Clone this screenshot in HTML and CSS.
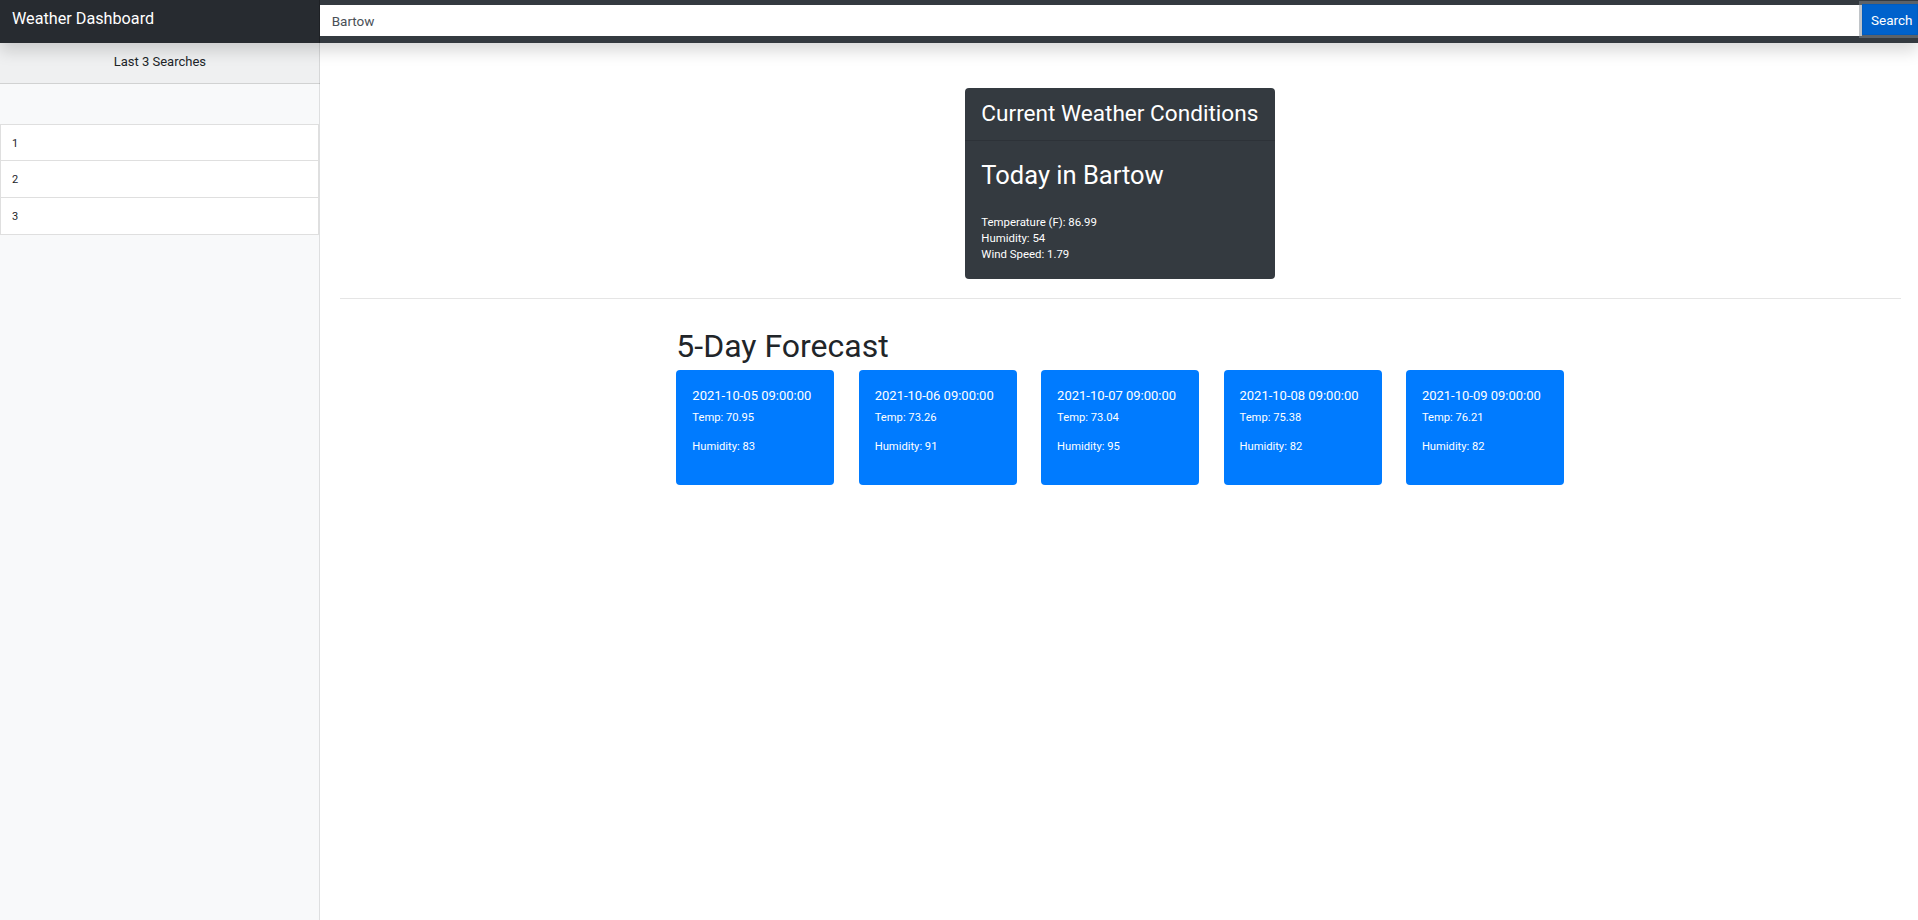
FILE: index.html
```
<!DOCTYPE html>
<html lang="en">
<head>
<meta charset="utf-8">
<title>Weather Dashboard</title>
<link rel="stylesheet" href="styles.css">
</head>
<body>
<header class="topbar">
  <a class="brand" href="#">Weather Dashboard</a>
  <form class="search">
    <input class="search-input" type="text" value="Bartow">
    <button class="search-btn" type="button">Search</button>
  </form>
</header>
<div class="layout">
  <nav class="sidebar">
    <div class="side-head">Last 3 Searches</div>
    <ul class="recent">
      <li class="recent-item">1</li>
      <li class="recent-item">2</li>
      <li class="recent-item">3</li>
    </ul>
  </nav>
  <main class="main">
    <section class="current">
      <div class="current-head">Current Weather Conditions</div>
      <div class="current-body">
        <h3 class="today">Today in Bartow</h3>
        <p class="stat">Temperature (F): 86.99</p>
        <p class="stat">Humidity: 54</p>
        <p class="stat">Wind Speed: 1.79</p>
      </div>
    </section>
    <hr class="divider">
    <section class="forecast">
      <h2 class="forecast-title">5-Day Forecast</h2>
      <div class="forecast-row">
        <div class="day"><div class="day-date">2021-10-05 09:00:00</div><p class="day-temp">Temp: 70.95</p><p class="day-hum">Humidity: 83</p></div>
        <div class="day"><div class="day-date">2021-10-06 09:00:00</div><p class="day-temp">Temp: 73.26</p><p class="day-hum">Humidity: 91</p></div>
        <div class="day"><div class="day-date">2021-10-07 09:00:00</div><p class="day-temp">Temp: 73.04</p><p class="day-hum">Humidity: 95</p></div>
        <div class="day"><div class="day-date">2021-10-08 09:00:00</div><p class="day-temp">Temp: 75.38</p><p class="day-hum">Humidity: 82</p></div>
        <div class="day"><div class="day-date">2021-10-09 09:00:00</div><p class="day-temp">Temp: 76.21</p><p class="day-hum">Humidity: 82</p></div>
      </div>
    </section>
  </main>
</div>
</body>
</html>
```
FILE: styles.css
```
* { box-sizing: border-box; }
html, body { margin: 0; padding: 0; }
body {
  font-family: "Segoe UI", Roboto, "Noto Sans", sans-serif;
  color: #212529;
  background: #fff;
  height: 920px;
  display: flex;
  flex-direction: column;
  overflow: hidden;
}
.topbar {
  position: relative;
  z-index: 2;
  height: 43px;
  flex: none;
  display: flex;
  background: #343a40;
  box-shadow: 0 8px 16px rgba(0,0,0,.15);
}
.brand {
  width: 319.67px;
  flex: none;
  padding: 0 0 5px 12px;
  line-height: 38px;
  font-size: 16.2px;
  color: #fff;
  text-decoration: none;
  background: rgba(0,0,0,.25);
  box-shadow: inset -1px 0 0 rgba(0,0,0,.25);
}
.search {
  flex: 1;
  display: flex;
  align-items: flex-start;
  margin: 0;
}
.search-input {
  flex: 1;
  height: 31px;
  margin-top: 5px;
  border: 0;
  padding: 0 12px;
  font-family: inherit;
  font-size: 13.5px;
  color: #495057;
  background: #fff;
  outline: none;
}
.search-btn {
  width: 56px;
  height: 31px;
  margin-top: 4px;
  border: 1px solid #005cbf;
  background: #0062cc;
  color: #fff;
  font-family: inherit;
  font-size: 13.5px;
  padding: 0 0 0 8px;
  text-align: left;
  box-shadow: 0 0 0 3px rgba(130,138,145,.5);
}
.layout {
  flex: 1;
  display: flex;
  min-height: 0;
}
.sidebar {
  width: 319.67px;
  flex: none;
  background: #f8f9fa;
  box-shadow: inset -1px 0 0 rgba(0,0,0,.1);
}
.side-head {
  height: 41px;
  padding-bottom: 3px;
  line-height: 37px;
  font-size: 13px;
  text-align: center;
  background: rgba(0,0,0,.035);
  border-bottom: 1px solid rgba(0,0,0,.125);
}
.recent {
  list-style: none;
  margin: 39.5px 1px 0 0;
  padding: 0;
}
.recent-item {
  background: #fff;
  border: 1px solid rgba(0,0,0,.125);
  margin-bottom: -1px;
  height: 37.7px;
  padding: 0 0 0 11px;
  line-height: 37px;
  font-size: 11px;
}
.main {
  flex: 1;
  padding: 0 17px 0 20px;
  min-width: 0;
}
.current {
  width: 310px;
  margin: 45px auto 0;
  background: #343a40;
  color: #fff;
  border-radius: 4px;
}
.current-head {
  height: 53px;
  line-height: 52px;
  padding-left: 16px;
  font-size: 22.6px;
  border-bottom: 1px solid rgba(0,0,0,.125);
}
.current-body {
  height: 138px;
  padding: 18.5px 16px 0;
}
.today {
  margin: 0 0 24.2px;
  font-size: 25.5px;
  font-weight: 400;
  line-height: 30px;
}
.stat {
  margin: 0;
  font-size: 11.4px;
  line-height: 16.3px;
}
.divider {
  margin: 19px 0 0;
  border: 0;
  border-top: 1px solid rgba(0,0,0,.1);
  height: 0;
}
.forecast {
  width: 888px;
  margin: 0 auto;
}
.forecast-title {
  margin: 28px 0 4.6px;
  font-size: 32px;
  font-weight: 400;
  line-height: 38px;
}
.forecast-row {
  display: flex;
  gap: 24.4px;
}
.day {
  width: 158px;
  height: 115px;
  flex: none;
  background: #007bff;
  color: #fff;
  border-radius: 4px;
  padding: 17.4px 16px 0;
}
.day-date {
  font-size: 13px;
  line-height: 18px;
}
.day-temp {
  margin: 6px 0 0;
  font-size: 11.2px;
  line-height: 14px;
}
.day-hum {
  margin: 15.4px 0 0;
  font-size: 11.2px;
  line-height: 14px;
}
```
